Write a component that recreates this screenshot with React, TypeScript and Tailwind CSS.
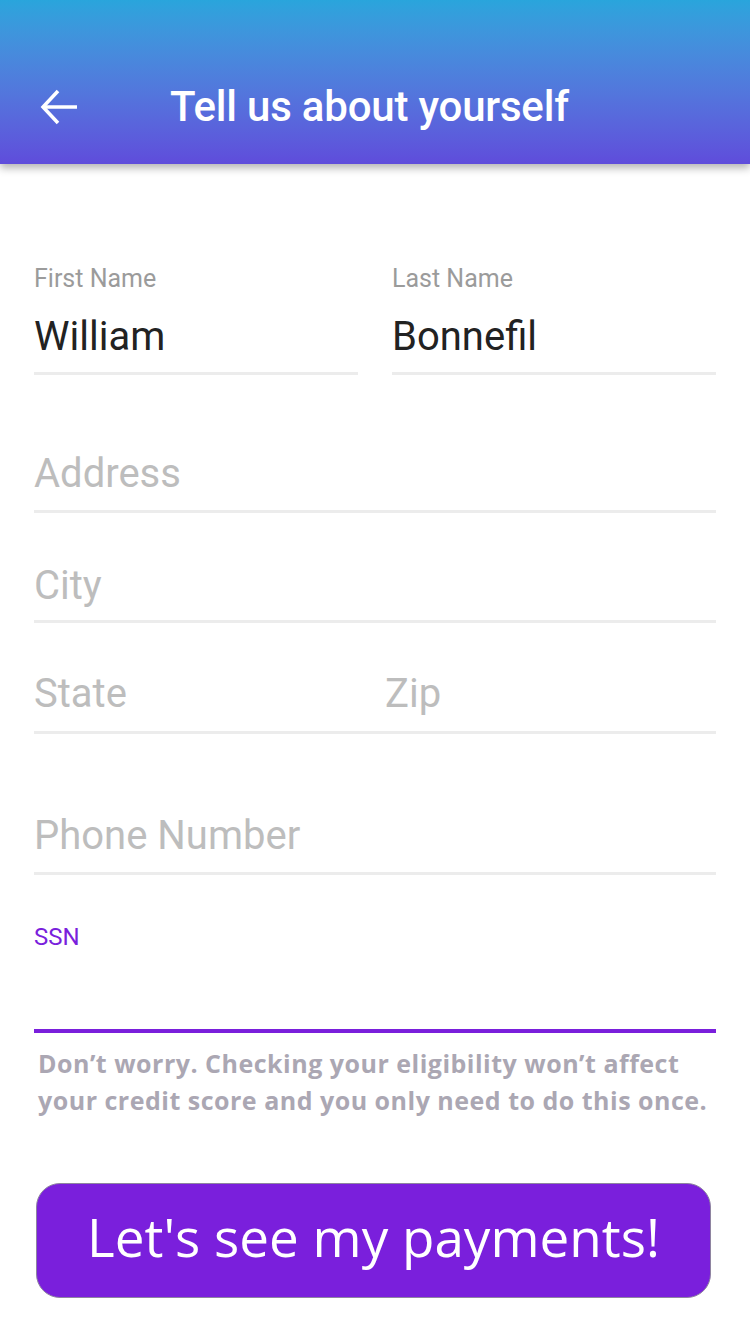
import React from 'react';

const roboto = { fontFamily: 'Roboto, "Liberation Sans", sans-serif' };

const Field = ({
  label,
  value,
  placeholder,
  className = '',
}: {
  label?: string;
  value?: string;
  placeholder?: string;
  className?: string;
}) => {
  return (
    <div className={`flex flex-col ${className}`}>
      {label && <div className="h-[30px] text-[25px] leading-[30px] text-[#9b9b9b] mb-[19px]">{label}</div>}
      <div className={`h-[48px] text-[40px] leading-[48px] ${value ? 'text-[#222]' : 'text-[#bdbdbd]'}`}>
        {value || placeholder}
      </div>
    </div>
  );
};

const App = () => {
  return (
    <div className="w-[750px] h-[1340px] bg-white overflow-hidden" style={roboto}>
      <header className="relative z-10 h-[164px] bg-gradient-to-b from-[#29a5dc] to-[#5f4cdb] shadow-[0_4px_8px_rgba(0,0,0,0.3)] pt-[83px]">
        <div className="flex items-center h-[48px]">
          <svg width="38" height="36" viewBox="0 0 38 36" className="ml-[40px]" fill="none" stroke="white" strokeWidth="3.5">
            <path d="M18 2 L3 18 L18 34" />
            <path d="M3 18 H37" />
          </svg>
          <h1 className="ml-[92px] text-[42px] font-medium text-white leading-[48px] tracking-[-0.2px]">Tell us about yourself</h1>
        </div>
      </header>

      <main className="px-[34px]">
        <div className="mt-[100px] grid grid-cols-[324px_324px] gap-x-[34px]">
          <div>
            <Field label="First Name" value="William" />
            <div className="mt-[11px] h-[3px] bg-[#ececec]" />
          </div>
          <div>
            <Field label="Last Name" value="Bonnefil" />
            <div className="mt-[11px] h-[3px] bg-[#ececec]" />
          </div>
        </div>

        <div className="mt-[75px]">
          <Field placeholder="Address" />
          <div className="mt-[12px] h-[3px] bg-[#ececec]" />
        </div>

        <div className="mt-[49px]">
          <Field placeholder="City" />
          <div className="mt-[10px] h-[3px] bg-[#ececec]" />
        </div>

        <div className="mt-[47px]">
          <div className="flex">
            <Field placeholder="State" className="w-[351px]" />
            <Field placeholder="Zip" />
          </div>
          <div className="mt-[13px] h-[3px] bg-[#ececec]" />
        </div>

        <div className="mt-[78px]">
          <Field placeholder="Phone Number" />
          <div className="mt-[12px] h-[3px] bg-[#ececec]" />
        </div>

        <div className="mt-[47px]">
          <div className="h-[30px] text-[24px] leading-[30px] text-[#7a1fdc]">SSN</div>
          <div className="mt-[77px] h-[4px] bg-[#7a1fdc]" />
        </div>

        <p
          className="mt-[12px] pl-[4px] text-[25px] leading-[37px] font-bold tracking-[0.5px] text-[#aba7b3] whitespace-nowrap"
          style={{ fontFamily: '"Open Sans", "Liberation Sans", sans-serif' }}
        >
          Don’t worry. Checking your eligibility won’t affect
          <br />
          your credit score and you only need to do this once.
        </p>

        <button
          className="mt-[64px] ml-[2px] w-[675px] h-[115px] rounded-[24px] bg-[#7a1fdc] border border-[#8e84a0] text-white text-[53px] font-medium flex items-center justify-center pb-[8px]"
          style={{ fontFamily: '"Open Sans", "Liberation Sans", sans-serif' }}
        >
          Let's see my payments!
        </button>
      </main>
    </div>
  );
};

export default App;
